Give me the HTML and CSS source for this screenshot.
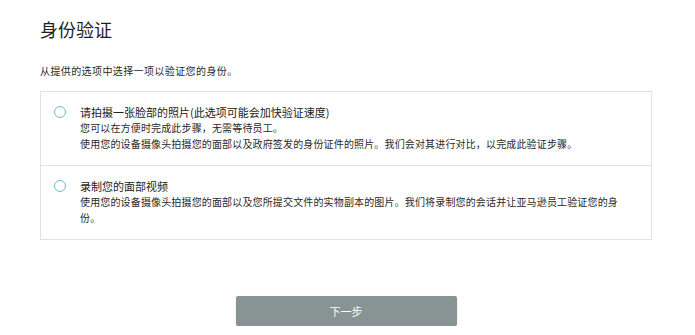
FILE: index.html
```html
<!DOCTYPE html>
<html lang="zh-CN">
<head>
<meta charset="utf-8">
<title>身份验证</title>
<link rel="stylesheet" href="styles.css">
</head>
<body>
<main class="page">
  <h1 class="title">身份验证</h1>
  <p class="intro">从提供的选项中选择一项以验证您的身份。</p>
  <div class="options">
    <label class="option">
      <span class="radio"></span>
      <span class="option-text">
        <span class="option-title">请拍摄一张脸部的照片(此选项可能会加快验证速度)</span>
        <span class="option-desc">您可以在方便时完成此步骤，无需等待员工。</span>
        <span class="option-desc">使用您的设备摄像头拍摄您的面部以及政府签发的身份证件的照片。我们会对其进行对比，以完成此验证步骤。</span>
      </span>
    </label>
    <label class="option">
      <span class="radio"></span>
      <span class="option-text">
        <span class="option-title">录制您的面部视频</span>
        <span class="option-desc">使用您的设备摄像头拍摄您的面部以及您所提交文件的实物副本的图片。我们将录制您的会话并让亚马逊员工验证您的身份。</span>
      </span>
    </label>
  </div>
  <div class="actions">
    <button class="next" type="button">下一步</button>
  </div>
</main>
</body>
</html>
```

FILE: styles.css
```css
html, body {
  margin: 0;
  padding: 0;
  background: #ffffff;
}

body {
  font-family: "Noto Sans CJK SC", "Noto Sans", sans-serif;
  color: #2a2a2a;
}

.page {
  width: 612px;
  padding: 17px 0 0 40px;
  display: flex;
  flex-direction: column;
}

.title {
  margin: 0;
  font-size: 18px;
  font-weight: 400;
  line-height: 24px;
  color: #1f1f1f;
}

.intro {
  margin: 22px 0 0 0;
  font-size: 10px;
  letter-spacing: 0.4px;
  line-height: 16px;
  color: #2a2a2a;
}

.options {
  margin-top: 12px;
  border: 1px solid #e2e2e2;
  display: flex;
  flex-direction: column;
}

.option {
  display: flex;
  align-items: flex-start;
  gap: 14px;
  padding: 12px 22px 13px 13px;
}

.option + .option {
  border-top: 1px solid #e2e2e2;
}

.radio {
  flex: none;
  width: 10px;
  height: 10px;
  margin-top: 2px;
  border: 1.5px solid #6cbccc;
  border-radius: 50%;
}

.option-text {
  display: flex;
  flex-direction: column;
  flex: 1;
}

.option-title {
  font-size: 11px;
  line-height: 16px;
  color: #222222;
}

.option-desc {
  font-size: 10px;
  letter-spacing: 0.15px;
  line-height: 16px;
  color: #2a2a2a;
}

.actions {
  display: flex;
  justify-content: center;
  margin-top: 56px;
}

.next {
  width: 221px;
  height: 30px;
  border: none;
  border-radius: 2px;
  background: #879493;
  color: #ffffff;
  font-family: "Noto Sans CJK SC", "Noto Sans", sans-serif;
  font-size: 11px;
  box-shadow: 0 1px 2px rgba(0, 0, 0, 0.15);
}
```
